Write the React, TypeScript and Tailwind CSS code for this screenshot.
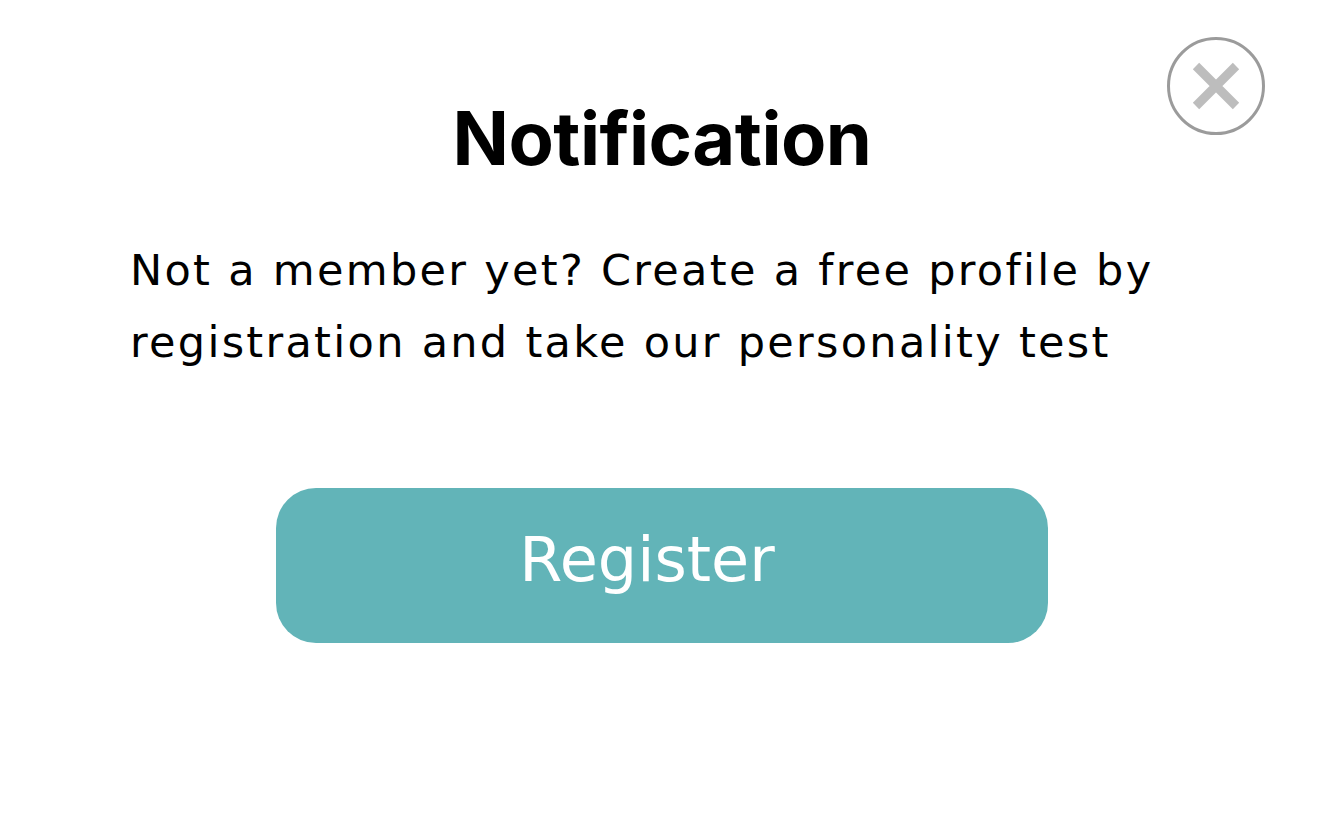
export default function App() {
  return (
    <div
      className="relative w-full h-[826px] bg-white text-black overflow-hidden"
      style={{ fontFamily: "'DejaVu Sans', Inter, sans-serif" }}
    >
      <button
        aria-label="Close"
        className="absolute left-[1167px] top-[37px] w-[98px] h-[98px] rounded-full border-[3px] border-[#9b9b9b] flex items-center justify-center"
      >
        <svg width="50" height="48" viewBox="0 0 50 48">
          <path
            d="M5 4 L45 44 M45 4 L5 44"
            stroke="#bdbdbd"
            strokeWidth="9"
            strokeLinecap="butt"
          />
        </svg>
      </button>

      <div className="flex flex-col pt-[94px]">
        <h1 className="text-center text-[74px] leading-[88px] font-bold tracking-[-0.5px] font-[Inter,sans-serif]">
          Notification
        </h1>

        <p className="mt-[52px] pl-[130px] pr-[110px] text-[43px] leading-[72px] font-normal tracking-[2.3px]">
          Not a member yet? Create a free profile by registration and take our
          personality test
        </p>

        <button className="mt-[110px] mx-auto w-[772px] h-[155px] rounded-[40px] bg-[#62b4b8] text-white text-[62px] font-normal pr-[30px] pb-[12px]">
          Register
        </button>
      </div>
    </div>
  );
}
